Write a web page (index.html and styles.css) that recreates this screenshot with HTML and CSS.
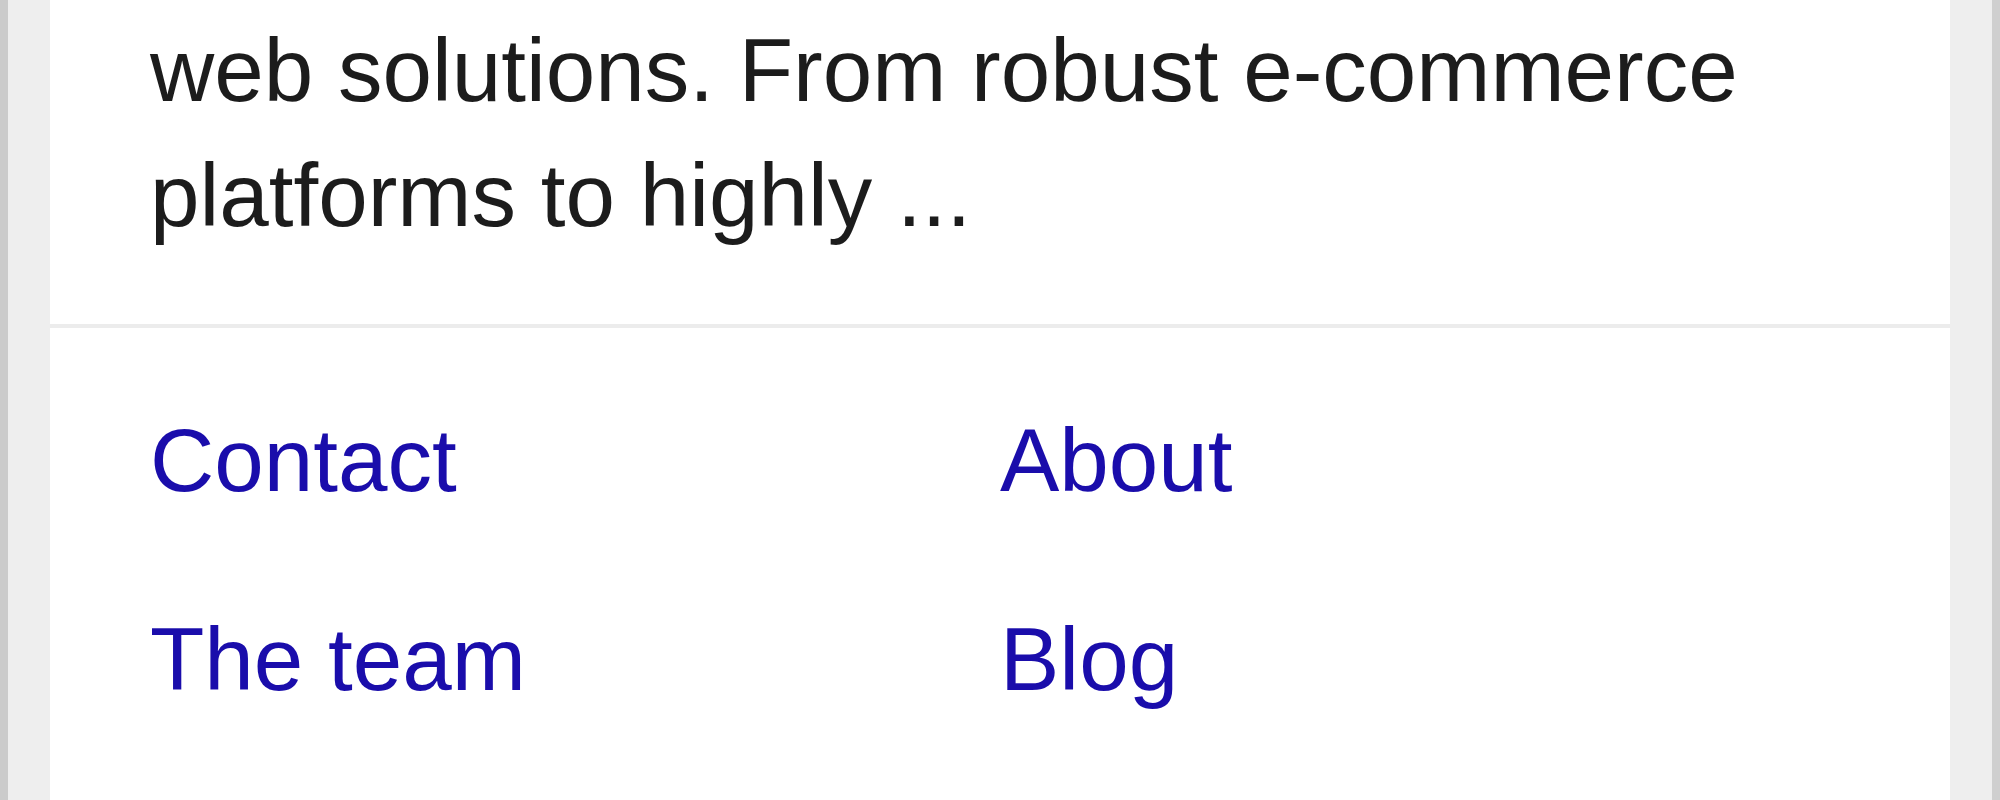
FILE: index.html
```html
<!DOCTYPE html>
<html lang="en">
<head>
<meta charset="utf-8">
<title>Card</title>
<link rel="stylesheet" href="styles.css">
</head>
<body>
<div class="frame">
  <div class="card">
    <p class="desc">web solutions. From robust e-commerce platforms to highly ...</p>
    <div class="divider"></div>
    <nav class="links">
      <a href="#" class="link">Contact</a>
      <a href="#" class="link">About</a>
      <a href="#" class="link">The team</a>
      <a href="#" class="link">Blog</a>
    </nav>
  </div>
</div>
</body>
</html>
```
FILE: styles.css
```css
html, body {
  margin: 0;
  padding: 0;
  height: 100%;
}
body {
  background: #eeeeee;
  font-family: "Liberation Sans", Arial, sans-serif;
  overflow: hidden;
}
.frame {
  box-sizing: border-box;
  height: 800px;
  border-left: 8px solid #cbcbcb;
  border-right: 8px solid #cfcfcf;
  padding: 0 42px;
  background: #eeeeee;
  display: flex;
}
.card {
  flex: 1;
  background: #ffffff;
  display: flex;
  flex-direction: column;
}
.desc {
  margin: 0;
  padding: 8px 100px 66px;
  font-size: 89px;
  line-height: 125px;
  color: #1c1c1c;
}
.divider {
  height: 4px;
  background: #ececec;
}
.links {
  display: grid;
  grid-template-columns: 1fr 1fr;
  row-gap: 74px;
  padding: 70px 100px 0;
}
.link {
  font-size: 89px;
  line-height: 125px;
  color: #1a0dab;
  text-decoration: none;
}
```
